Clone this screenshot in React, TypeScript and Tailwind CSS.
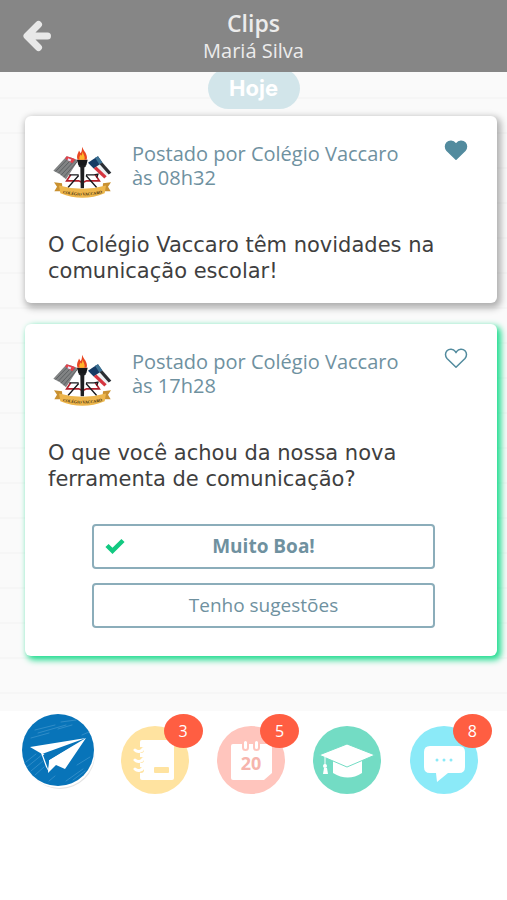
import { useState } from "react";
import type { ReactNode } from "react";

const SANS = "font-['Trebuchet_MS','Open_Sans',sans-serif]";
const BODY = "font-['DejaVu_Sans',sans-serif]";

function ArrowLeft() {
  return (
    <svg viewBox="0 0 30 32" className="h-8 w-[30px]" fill="none" stroke="#e8e8e8" strokeWidth="7" strokeLinecap="round" strokeLinejoin="round" aria-hidden="true">
      <path d="M16.5 4.500L5 16l11.500 11.500M6 16h19.500" />
    </svg>
  );
}

function Emblem() {
  return (
    <svg viewBox="39 46 177 158" className="h-[53px] w-[59px] shrink-0" role="img" aria-label="Colégio Vaccaro">
      <path d="M92 132l-12 18h36l12 5 12-5h38l-12-18" fill="none" stroke="#b3202c" strokeWidth="5" />
      <path d="M84 170l32-36M170 170l-32-36M88 132h28M138 132h24l12-2-4 10" stroke="#17191c" strokeWidth="4" fill="none" />
      <path d="M40 120L80 76q16 4 35 12L78 145q-18-17-38-25z" fill="#818384" />
      <path d="M47 122l40-42M55 127l42-44M63 133l42-45M71 139l40-46" stroke="#56595c" strokeWidth="2.500" fill="none" />
      <path d="M80 76q16 4 26 9l-9 12-22-14z" fill="#e5404a" />
      <path d="M84 82l10 4-3 6-8-4z" fill="#dfe8ff" />
      <path d="M144 96q16-12 30-20l40 50q-14 4-22 18z" fill="#edf0f2" />
      <path d="M144 96q16-12 30-20l13 19-26 18z" fill="#163b64" />
      <path d="M174 76l13 19-9 6-13-20z" fill="#3c7294" />
      <path d="M187 95l27 31-8 5-27-31z" fill="#2b2e33" />
      <path d="M161 113l8-6 31 29-7 7z" fill="#d6353f" />
      <path d="M118 96h18l2 10-5 4-1 62h-10l-1-62-5-4z" fill="#1e1f21" />
      <path d="M111 87h32l-4 16h-24z" fill="#17181a" />
      <path d="M127 48c2 12 18 22 13 39h-27c-5-13 2-20 4-28l5 8c5-7 3-12 5-19z" fill="#e94722" />
      <path d="M128 62c1 8 9 15 5 25h-14c-3-8 1-12 3-16l3 4z" fill="#ffb52c" />
      <path d="M42 154l24 3 2 24H43l8-13zM213 154l-24 3-2 24h25l-8-13z" fill="#c99131" />
      <path d="M57 164q70 20 141 0l-4 23q-66 27-133 0z" fill="#edb64c" />
      <path id="ribbon-line" d="M60 185q67 18 135 0" fill="none" />
      <text fontSize="12" fontWeight="700" fill="#3d2a0b" fontFamily="Liberation Serif, serif" textAnchor="middle">
        <textPath href="#ribbon-line" startOffset="50%">COLÉGIO VACCARO</textPath>
      </text>
    </svg>
  );
}

function LikeButton({ initial }: { initial: boolean }) {
  const [liked, setLiked] = useState(initial);
  return (
    <button type="button" aria-label="Curtir" aria-pressed={liked} onClick={() => setLiked(!liked)} className="h-6 w-6 shrink-0">
      <svg viewBox="0 0 24 24" className="size-6" fill={liked ? "#528b9e" : "none"} stroke="#528b9e" strokeWidth="1.5" strokeLinejoin="round" aria-hidden="true">
        <path d="M12 21.200L3 12.500C1 10.300 1 6.800 3 4.700c2.100-2.200 6.300-2.200 8.200.7l.8 1.300.8-1.300c1.900-2.900 6.100-2.900 8.200-.7 2 2.100 2 5.600 0 7.800z" />
      </svg>
    </button>
  );
}

interface PostProps {
  time: string;
  text: string;
  liked: boolean;
  shadow: string;
  children?: ReactNode;
}

function Post({ time, text, liked, shadow, children }: PostProps) {
  return (
    <article className={`rounded-md bg-white px-[23px] pt-[26px] ${shadow}`}>
      <div className="flex items-start pl-[5px]">
        <div className="pt-1">
          <Emblem />
        </div>
        <p className={`ml-5 flex-1 text-xl/6 text-[#6f919f] ${SANS}`}>
          Postado por Colégio Vaccaro
          <br />
          às {time}
        </p>
        <div className="-mt-1 mr-[6px]">
          <LikeButton initial={liked} />
        </div>
      </div>
      <p className={`mt-[33px] text-[21px]/[26px] text-[#3f3f3f] ${BODY}`}>{text}</p>
      {children}
    </article>
  );
}

function Poll() {
  const options = ["Muito Boa!", "Tenho sugestões"];
  const [choice, setChoice] = useState(0);
  return (
    <div className="mr-[39px] ml-11 flex flex-col gap-[14px] pt-8">
      {options.map((option, i) => (
        <button
          key={option}
          type="button"
          aria-pressed={choice === i}
          onClick={() => setChoice(i)}
          className={`relative h-[45px] rounded border-2 border-[#8badba] text-[19px] text-[#6f919f] ${SANS} ${choice === i ? "font-bold" : ""}`}
        >
          {choice === i && (
            <svg viewBox="0 0 20 16" className="absolute top-3 left-[11px] h-4 w-5" fill="none" stroke="#12c981" strokeWidth="4.500" aria-hidden="true">
              <path d="M2 7.500l5.500 5.300L18 2.500" />
            </svg>
          )}
          {option}
        </button>
      ))}
    </div>
  );
}

function PlaneIcon() {
  return (
    <svg viewBox="0 0 74 78" className="h-[78px] w-[74px]" aria-hidden="true">
      <circle cx="39" cy="41" r="35" fill="#e4e4e4" />
      <circle cx="38" cy="39" r="36" fill="#ffffff" />
      <circle cx="37" cy="37" r="36" fill="#0874b9" />
      <g stroke="#3d94cc" strokeWidth="1" strokeLinecap="round" fill="none" opacity="0.75">
        <path d="M14 17l20-5M17 20l28-8M40 9l15-2M10 25l18-5M37 16l14-4M5 49l10-8M6 54l16-13M10 58l12-10M14 62l9-8M45 68l17-12M52 67l12-9M56 52l13-8M61 22l7-3M28 68l6-5" />
      </g>
      <path d="M9 34l56-9-44 16z" fill="#fff" />
      <path d="M20 40l3 1 4 8 1 10-3-5z" fill="#fff" />
      <path d="M65 25L44 56l-9-4-8 8 1-13z" fill="#fff" />
      <path d="M22 42l35-13-29 18-1 9z" fill="#0874b9" />
    </svg>
  );
}

function NotebookIcon() {
  return (
    <svg viewBox="0 0 68 68" className="size-[68px]" aria-hidden="true">
      <circle cx="34" cy="34" r="34" fill="#ffe3a0" />
      <rect x="19" y="14" width="34" height="40" rx="2" fill="#fff" />
      <rect x="33" y="41" width="15" height="6" rx="1" fill="#ffe3a0" />
      <g fill="#ffe3a0"><circle cx="20" cy="24" r="3" /><circle cx="20" cy="34" r="3" /><circle cx="20" cy="44" r="3" /></g>
      <path d="M14 24c3 3 7 1 8-1M14 34c3 3 7 1 8-1M14 43c3 3 7 1 8-1" stroke="#fff" strokeWidth="3" strokeLinecap="round" fill="none" />
    </svg>
  );
}

function CalendarIcon() {
  return (
    <svg viewBox="0 0 68 68" className="size-[68px]" aria-hidden="true">
      <circle cx="34" cy="34" r="34" fill="#ffc5bd" />
      <path d="M16 18h37q2 0 2 2v27l-8 7H16q-2 0-2-2V20q0-2 2-2z" fill="#fff" />
      <g fill="#fff" stroke="#ffc5bd" strokeWidth="2">
        <rect x="26" y="14" width="5" height="10" rx="2.500" />
        <rect x="37" y="14" width="5" height="10" rx="2.500" />
      </g>
      <text x="34" y="44" fill="#f6b5ad" fontSize="18" fontWeight="700" fontFamily="Open Sans, sans-serif" textAnchor="middle">20</text>
    </svg>
  );
}

function GraduationIcon() {
  return (
    <svg viewBox="0 0 68 68" className="size-[68px]" aria-hidden="true">
      <circle cx="34" cy="34" r="34" fill="#73dcc4" />
      <path d="M20 34h29v13q-14 9-29 0z" fill="#fff" />
      <path d="M6 29l28-11 28 11-28 12z" fill="#fff" stroke="#73dcc4" strokeWidth="1" />
      <path d="M12 31v8" stroke="#fff" strokeWidth="1" />
      <circle cx="12" cy="40" r="2" fill="#fff" />
      <path d="M11 42h3l1 6h-5z" fill="#fff" />
    </svg>
  );
}

function ChatIcon() {
  return (
    <svg viewBox="0 0 68 68" className="size-[68px]" aria-hidden="true">
      <circle cx="34" cy="34" r="34" fill="#8beaf8" />
      <path d="M20 20h29q6 0 6 6v15q0 6-6 6H38l-11 9-1-9h-6q-6 0-6-6V26q0-6 6-6z" fill="#fff" />
      <g fill="#8beaf8"><circle cx="27" cy="34" r="1.500" /><circle cx="34" cy="34" r="1.500" /><circle cx="41" cy="34" r="1.500" /></g>
    </svg>
  );
}

const tabs: { label: string; icon: ReactNode; count?: number }[] = [
  { label: "Clips", icon: <PlaneIcon /> },
  { label: "Agenda", icon: <NotebookIcon />, count: 3 },
  { label: "Calendário", icon: <CalendarIcon />, count: 5 },
  { label: "Acadêmico", icon: <GraduationIcon /> },
  { label: "Mensagens", icon: <ChatIcon />, count: 8 },
];

export default function App() {
  return (
    <div className="min-h-screen bg-white">
      <header className={`relative z-10 grid h-[72px] grid-cols-[60px_1fr_60px] items-center bg-[#868686] text-center text-[#ececec] ${SANS}`}>
        <button type="button" aria-label="Voltar" className="flex justify-center pl-[14px]">
          <ArrowLeft />
        </button>
        <div className="pt-px">
          <h1 className="text-[23px]/7 font-semibold">Clips</h1>
          <p className="text-xl/7">Mariá Silva</p>
        </div>
      </header>
      <main className="bg-[#fafafa] bg-[repeating-linear-gradient(to_bottom,transparent_0px,transparent_25px,#f6f6f6_25px,#f6f6f6_27px,transparent_27px,transparent_35px)] pb-[55px]">
        <div className="flex justify-center">
          <h2 className="-mt-1 flex h-[41px] w-[92px] items-center justify-center rounded-full bg-[#d2e5ea] font-['Inter',sans-serif] text-[22px] font-bold text-white">Hoje</h2>
        </div>
        <div className="mt-[7px] mr-[10px] ml-[25px] flex flex-col gap-[21px]">
          <Post
            time="08h32"
            text="O Colégio Vaccaro têm novidades na comunicação escolar!"
            liked
            shadow="pb-[19px] shadow-[2px_3px_7px_2px_rgba(0,0,0,0.3)]"
          />
          <Post
            time="17h28"
            text="O que você achou da nossa nova ferramenta de comunicação?"
            liked={false}
            shadow="pb-7 shadow-[3px_3px_6px_1px_#1fdc8f]"
          >
            <Poll />
          </Post>
        </div>
      </main>
      <nav className="grid grid-cols-5 pr-[15px] pl-[10px]">
        {tabs.map(({ label, icon, count }, i) => (
          <div key={label} className={`flex justify-center ${i === 0 ? "pt-[2px]" : "pt-[15px]"}`}>
            <button type="button" aria-label={label} className="relative self-start">
              {icon}
              {count !== undefined && (
                <span className="absolute -top-3 -right-[14px] flex h-[34px] w-[39px] items-center justify-center rounded-[50%] bg-[#ff5e42] font-['Open_Sans',sans-serif] text-base text-white">
                  {count}
                </span>
              )}
            </button>
          </div>
        ))}
      </nav>
    </div>
  );
}
